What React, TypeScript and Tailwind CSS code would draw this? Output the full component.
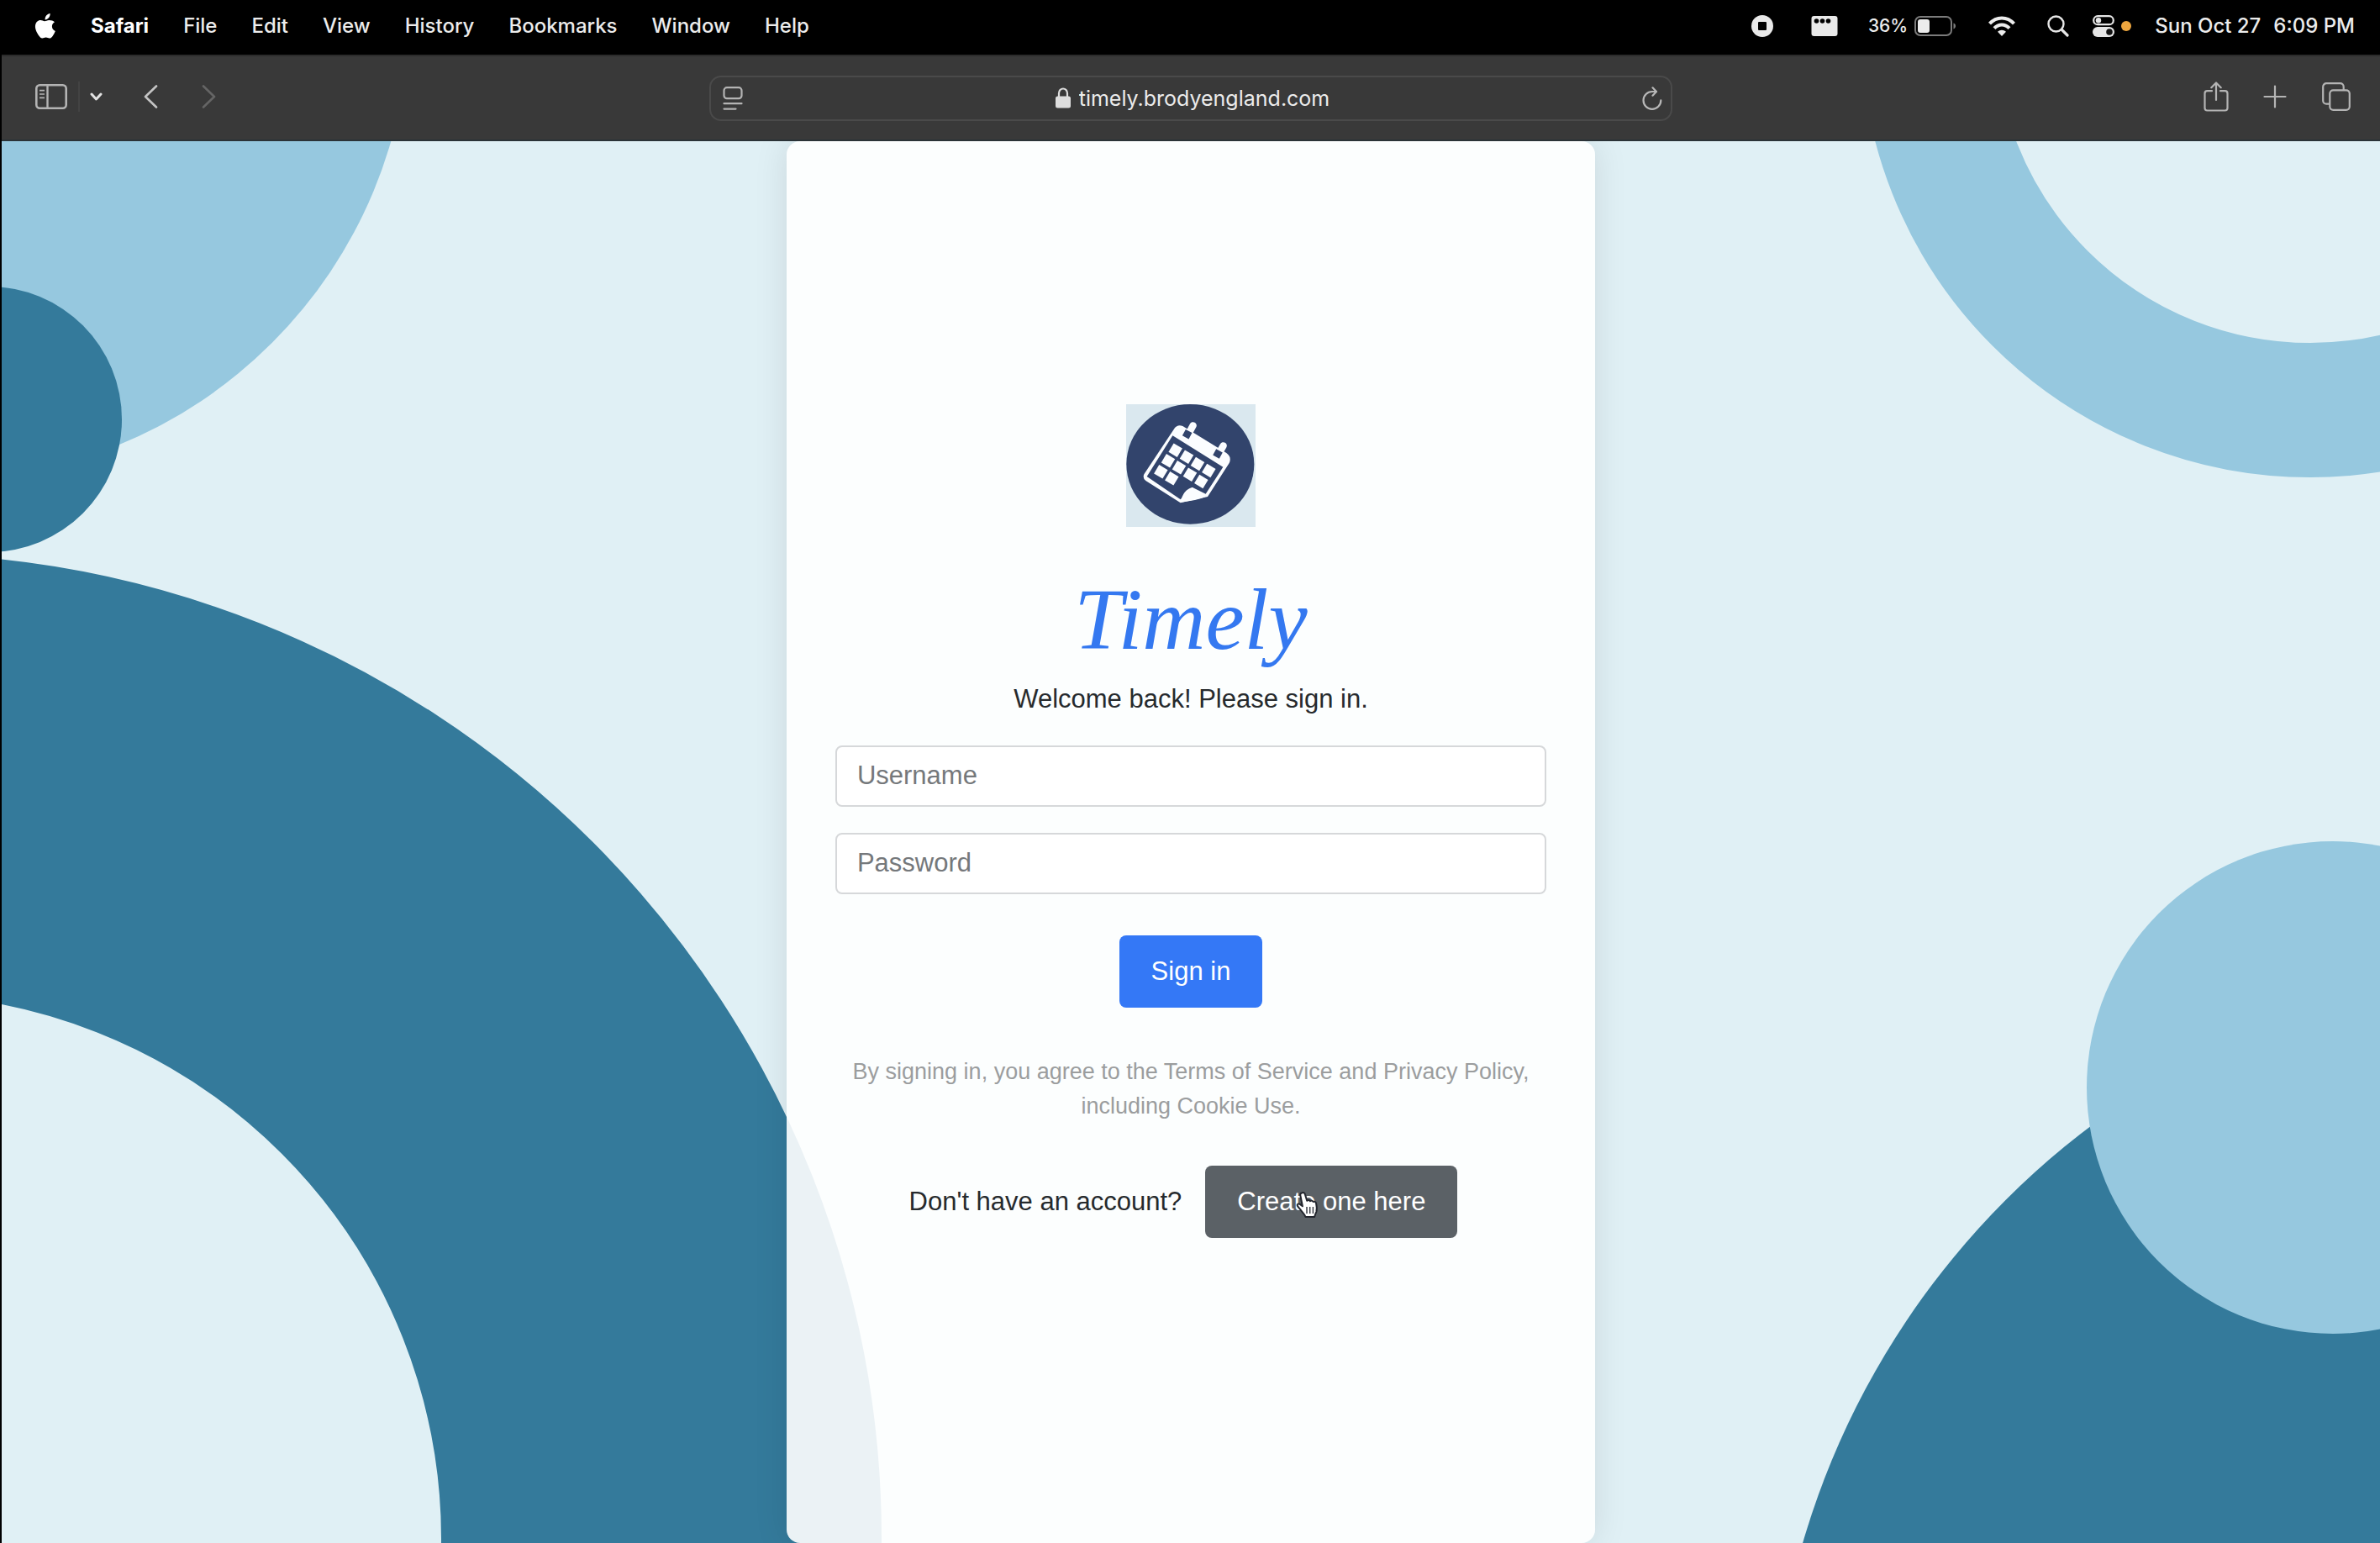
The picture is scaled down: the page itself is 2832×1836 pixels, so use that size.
import React from "react";

const menuItems = ["File", "Edit", "View", "History", "Bookmarks", "Window", "Help"];

const logoCells = [
  [480, 284],
  [520, 308],
  [559, 333],
  [599, 357],
  [454, 322],
  [493, 346],
  [532, 371],
  [572, 396],
  [428, 361],
  [467, 385],
];

function AppleIcon() {
  return (
    <svg className="h-[30px] w-[26px]" viewBox="0 0 26 30" fill="#fff" aria-hidden="true">
      <path d="M18.6 0c.2 2.1-.6 4-1.7 5.300C15.800 6.600 14.200 7.500 12.600 7.400c-.2-2 .7-3.900 1.700-5.100C15.400 1 17.200.1 18.600 0z" />
      <path d="M24 10.300c-2 1.200-3.100 3-3.100 5.100 0 2.500 1.500 4.600 3.900 5.500-.7 2.100-1.800 4.200-3.200 6-1 1.300-2.100 2.600-3.700 2.600-1.700 0-2.200-1-4.300-1-2 0-2.700 1-4.300 1s-2.700-1.200-3.800-2.700C3.200 23.500.4 18.600 1 14.300c.5-3.900 3.200-6.300 6.200-6.300 1.900 0 3.400 1.200 4.900 1.200 1.300 0 3.100-1.300 5.300-1.300 2.700 0 5 .8 6.600 2.400z" />
    </svg>
  );
}

function RecordIcon() {
  return (
    <svg className="size-[26px]" viewBox="0 0 26 26" aria-hidden="true">
      <circle cx="13" cy="13" r="13" fill="#e9e9e9" />
      <rect x="8" y="8" width="10" height="10" rx="1" fill="#000" />
    </svg>
  );
}

function ClipIcon() {
  return (
    <svg className="h-[24px] w-[32px]" viewBox="0 0 32 24" aria-hidden="true">
      <rect x="0.500" width="31" height="24" rx="3" fill="#e9e9e9" />
      <circle cx="6.500" cy="6" r="2.800" fill="#000" />
      <circle cx="13.500" cy="6" r="2.800" fill="#000" />
      <circle cx="20.500" cy="6" r="2.800" fill="#000" />
    </svg>
  );
}

function BatteryIcon() {
  return (
    <svg className="h-[24px] w-[50px]" viewBox="0 0 50 24" aria-hidden="true">
      <rect x="1" y="1" width="43" height="22" rx="6" fill="none" stroke="#7b7b7b" strokeWidth="2" />
      <rect x="4" y="4" width="14" height="16" rx="3" fill="#ececec" />
      <path d="M46.500 8.500c1.600.6 2.500 1.900 2.500 3.500s-.9 2.900-2.500 3.500z" fill="#7b7b7b" />
    </svg>
  );
}

function WifiIcon() {
  return (
    <svg className="h-[24px] w-[32px]" viewBox="0 0 32 24" fill="none" stroke="#ececec" strokeWidth="4" aria-hidden="true">
      <path d="M1.500 9.200C9.500 .2 22.500 .2 30.500 9.200" />
      <path d="M7 14.700c5-5.600 13-5.600 18 0" />
      <path d="M16 24l-5-5.200c2.800-2.700 7.200-2.700 10 0z" fill="#ececec" stroke="none" />
    </svg>
  );
}

function SearchIcon() {
  return (
    <svg className="size-[26px]" viewBox="0 0 26 26" fill="none" stroke="#e6e6e6" strokeLinecap="round" aria-hidden="true">
      <circle cx="10.500" cy="10.500" r="9" strokeWidth="2.400" />
      <path d="M17.500 17.500l6.500 6.500" strokeWidth="3.200" />
    </svg>
  );
}

function ControlIcon() {
  return (
    <svg className="size-[26px]" viewBox="0 0 26 26" aria-hidden="true">
      <rect x="1.200" y="1.200" width="23.600" height="10" rx="5" fill="none" stroke="#e6e6e6" strokeWidth="2.200" />
      <circle cx="7" cy="6.200" r="3.200" fill="#e6e6e6" />
      <rect x="0" y="14" width="26" height="12" rx="6" fill="#e6e6e6" />
      <circle cx="20" cy="20" r="3.800" fill="#111" />
    </svg>
  );
}

function SidebarIcon() {
  return (
    <svg className="h-[30px] w-[38px]" viewBox="0 0 38 30" fill="none" stroke="#b4b4b4" aria-hidden="true">
      <rect x="1.300" y="1.300" width="35.400" height="27.400" rx="4" strokeWidth="2.600" />
      <path d="M14.500 1.300v27.400" strokeWidth="2.400" />
      <path d="M5 7.700h6M5 12h6M5 16.300h6" strokeWidth="1.700" />
    </svg>
  );
}

function ReaderIcon() {
  return (
    <svg className="h-[28px] w-[24px]" viewBox="0 0 24 28" fill="none" stroke="#b4b4b4" strokeWidth="2.200" strokeLinecap="round" aria-hidden="true">
      <rect x="1.500" y="1.200" width="21" height="13" rx="3.500" />
      <path d="M1.500 20.200h21M1.500 26.600h14" />
    </svg>
  );
}

function LockIcon() {
  return (
    <svg className="h-[25px] w-[18px]" viewBox="0 0 18 25" aria-hidden="true">
      <rect x="0" y="10.500" width="18" height="14" rx="2.500" fill="#dedede" />
      <path d="M4 11.500V7a5 5.500 0 0110 0v4.500" fill="none" stroke="#dedede" strokeWidth="2.200" />
    </svg>
  );
}

function ReloadIcon() {
  return (
    <svg className="h-[28px] w-[24px]" viewBox="0 0 24 28" fill="none" stroke="#b8b8b8" strokeWidth="2.200" strokeLinecap="round" strokeLinejoin="round" aria-hidden="true">
      <path d="M22.300 16.400A10.400 10.400 0 1112 6h4.500" />
      <path d="M12.500 1.300L17 6l-4.500 4.700" />
    </svg>
  );
}

function ShareIcon() {
  return (
    <svg className="h-[36px] w-[30px]" viewBox="0 0 30 36" fill="none" stroke="#b4b4b4" strokeWidth="2.200" strokeLinecap="round" strokeLinejoin="round" aria-hidden="true">
      <path d="M10 11.200H4.500a3 3 0 00-3 3V31.500a3 3 0 003 3h21a3 3 0 003-3V14.200a3 3 0 00-3-3H20" />
      <path d="M15 22V1.800M9.300 7.200L15 1.500l5.700 5.700" />
    </svg>
  );
}

function PlusIcon() {
  return (
    <svg className="size-[28px]" viewBox="0 0 28 28" fill="none" stroke="#b4b4b4" strokeWidth="2.200" strokeLinecap="round" aria-hidden="true">
      <path d="M14 1.500v25M1.500 14h25" />
    </svg>
  );
}

function TabsIcon() {
  return (
    <svg className="h-[34px] w-[34px]" viewBox="0 0 34 34" fill="none" stroke="#b4b4b4" strokeWidth="2.200" aria-hidden="true">
      <rect x="9.300" y="9.300" width="23.500" height="23.500" rx="4" />
      <path d="M9.300 25.700H5.200a4 4 0 01-4-4V5.200a4 4 0 014-4h16.500a4 4 0 014 4v4.100" />
    </svg>
  );
}

function HandCursor() {
  return (
    <svg
      className="pointer-events-none absolute top-[36%] left-[36%] h-[34px] w-[28px]"
      viewBox="0 0 28 34"
      aria-hidden="true"
    >
      <path
        d="M7 2.500c2-1 3.500 0 4 2l2.200 7.300c1-1.300 3-1.200 3.800.4 1.200-1 3-.7 3.600.8 1.300-.8 3 0 3.400 1.600.8 3.400 1.300 6.900.4 10.200-.6 2-1.900 3.400-2.200 6.200H11.500c-.7-2.800-3.300-5-5.200-7.500-1.600-2.200-3.400-3.700-4.600-6-.5-1.700 1.400-2.700 3.200-1.600l3 2.400L5.300 5.300C5 4 5.700 2.900 7 2.500z"
        fill="#fff"
        stroke="#23262e"
        strokeWidth="2"
        strokeLinejoin="round"
      />
      <path d="M13 19v8M16.700 19v8M20.400 19v8" stroke="#3c4048" strokeWidth="1.500" />
    </svg>
  );
}

function TimelyLogo() {
  return (
    <svg className="h-[146px] w-[154px]" viewBox="304 120 462 438" role="img" aria-label="Timely logo">
      <rect x="304" y="120" width="462" height="438" fill="#dae8ef" />
      <ellipse cx="533" cy="334" rx="228" ry="214" fill="#32446c" />
      <path
        d="M474 210Q486 190 506 198L662 294Q682 308 672 330L595 450L498 472L374 393Q362 384 368 370Z"
        fill="#fbfdff"
      />
      <path d="M470 232L650 344L588 440L541 417Q520 424 513 444L498 460L378 378Z" fill="#32446c" />
      <path d="M498 470Q508 424 541 417Q556 436 592 448Q560 464 498 470Z" fill="#fbfdff" />
      {logoCells.map(([x, y]) => (
        <rect
          key={`${x}-${y}`}
          x={x - 18}
          y={y - 18}
          width="36"
          height="36"
          fill="#fbfdff"
          transform={`rotate(31 ${x} ${y})`}
        />
      ))}
      <path d="M543 196L532 216M651 268L640 287" stroke="#fbfdff" strokeWidth="25" strokeLinecap="round" />
      <path d="M528 216L516 238M637 286L625 308" stroke="#32446c" strokeWidth="26" />
    </svg>
  );
}

function Backdrop() {
  return (
    <svg
      className="absolute inset-0 h-full w-full"
      viewBox="2 168 2830 1668"
      preserveAspectRatio="xMidYMid slice"
      aria-hidden="true"
    >
      <circle cx="-70" cy="14" r="557" fill="#96c8df" />
      <circle cx="-13" cy="499" r="158" fill="#347a9b" />
      <circle cx="-123" cy="1831" r="910" fill="none" stroke="#347a9b" strokeWidth="524" />
      <circle cx="2749" cy="33" r="455" fill="none" stroke="#96c8df" strokeWidth="160" />
      <circle cx="3062" cy="2103" r="955" fill="#347a9b" />
      <circle cx="2776" cy="1294" r="293" fill="#96c8df" />
    </svg>
  );
}

function MenuBar() {
  return (
    <header className="flex h-[65px] items-center justify-between bg-black pr-[30px] pl-[41px] text-[24px] leading-none font-medium text-[#ececec]">
      <nav className="flex items-center gap-[41px] pb-1" aria-label="Menu bar">
        <button type="button" aria-label="Apple menu">
          <AppleIcon />
        </button>
        <button type="button" className="font-bold text-white">
          Safari
        </button>
        {menuItems.map((item) => (
          <button key={item} type="button">
            {item}
          </button>
        ))}
      </nav>
      <div className="flex items-center pb-1">
        <button type="button" aria-label="Stop recording" className="mr-[45px]">
          <RecordIcon />
        </button>
        <button type="button" aria-label="Screen clip" className="mr-9">
          <ClipIcon />
        </button>
        <span className="mr-2 text-[21px]">36%</span>
        <span className="mr-[38px]">
          <BatteryIcon />
        </span>
        <button type="button" aria-label="Wi-Fi" className="mr-[38px]">
          <WifiIcon />
        </button>
        <button type="button" aria-label="Search" className="mr-7">
          <SearchIcon />
        </button>
        <button type="button" aria-label="Control Center" className="mr-2">
          <ControlIcon />
        </button>
        <span className="mr-7 size-3 rounded-full bg-[#eda63f]" />
        <time className="flex gap-[15px]">
          <span>Sun Oct 27</span>
          <span>6:09 PM</span>
        </time>
      </div>
    </header>
  );
}

function Toolbar() {
  return (
    <div className="grid h-[103px] grid-cols-[1fr_40.5%_1fr] items-center border-t-2 border-b-2 border-t-[#2c2c2c] border-b-[#2b3337] bg-[#393939]">
      <div className="flex items-center pb-1 pl-10">
        <button type="button" aria-label="Sidebar">
          <SidebarIcon />
        </button>
        <span className="mr-3 ml-[13px] h-9 w-[2px] bg-[#434343]" />
        <button type="button" aria-label="Tab groups" className="mr-[49px]">
          <svg className="h-[10px] w-[15px]" viewBox="0 0 15 10" fill="none" stroke="#e2e2e2" strokeWidth="3" strokeLinecap="round" strokeLinejoin="round" aria-hidden="true">
            <path d="M2 2l5.500 6L13 2" />
          </svg>
        </button>
        <button type="button" aria-label="Back" className="mr-[52px]">
          <svg className="h-[28px] w-[17px]" viewBox="0 0 17 28" fill="none" stroke="#c4c4c4" strokeWidth="2.600" strokeLinecap="round" strokeLinejoin="round" aria-hidden="true">
            <path d="M15 1.500L2 14l13 12.500" />
          </svg>
        </button>
        <button type="button" aria-label="Forward">
          <svg className="h-[28px] w-[17px]" viewBox="0 0 17 28" fill="none" stroke="#656565" strokeWidth="2.600" strokeLinecap="round" strokeLinejoin="round" aria-hidden="true">
            <path d="M2 1.500L15 14 2 26.500" />
          </svg>
        </button>
      </div>
      <div className="flex h-[54px] items-center rounded-[14px] border-2 border-[#4a4a4a] pr-[10px] pl-[14px]">
        <button type="button" aria-label="Page menu">
          <ReaderIcon />
        </button>
        <div className="flex flex-1 items-center justify-center gap-[10px]">
          <LockIcon />
          <input
            type="text"
            aria-label="Address"
            defaultValue="timely.brodyengland.com"
            className="field-sizing-content bg-transparent text-[25px] leading-8 text-[#ececec] outline-none"
          />
        </div>
        <button type="button" aria-label="Reload">
          <ReloadIcon />
        </button>
      </div>
      <div className="flex items-center justify-end pr-[35px] pb-1">
        <button type="button" aria-label="Share" className="mr-[41px]">
          <ShareIcon />
        </button>
        <button type="button" aria-label="New tab" className="mr-[42px]">
          <PlusIcon />
        </button>
        <button type="button" aria-label="Tab overview">
          <TabsIcon />
        </button>
      </div>
    </div>
  );
}

function SignInCard() {
  return (
    <form
      className="relative flex w-[34%] flex-col items-center justify-center rounded-[16px] bg-white/90 px-[58px] pb-[51px] text-[31px] leading-[46px] text-[#262a2d] shadow-[0_0_40px_rgba(0,0,0,0.1)]"
      onSubmit={(event: React.FormEvent) => event.preventDefault()}
    >
      <TimelyLogo />
      <h1 className="mt-[50px] mb-3 font-['Apple_Chancery','Liberation_Serif',serif] text-[104px] leading-[120px] text-[#3478f0] italic">
        Timely
      </h1>
      <p className="mb-8">Welcome back! Please sign in.</p>
      <input
        type="text"
        aria-label="Username"
        placeholder="Username"
        className="mb-[31px] h-[73px] w-full rounded-[8px] border-2 border-[#d6d8da] bg-white px-6 outline-none placeholder:text-[#75787b]"
      />
      <input
        type="password"
        aria-label="Password"
        placeholder="Password"
        className="mb-[49px] h-[73px] w-full rounded-[8px] border-2 border-[#d6d8da] bg-white px-6 outline-none placeholder:text-[#75787b]"
      />
      <button type="submit" className="mb-14 rounded-[8px] bg-[#3478f6] px-[38px] py-5 text-white">
        Sign in
      </button>
      <p className="mb-[50px] text-center text-[27px] leading-[41px] text-[#9b9d9e]">
        By signing in, you agree to the Terms of Service and Privacy Policy, including Cookie Use.
      </p>
      <div className="flex items-center pr-[18px] whitespace-nowrap">
        <span className="mr-7">Don't have an account?</span>
        <button type="button" className="relative rounded-[8px] bg-[#5b6166] px-[38px] py-5 text-white">
          Create one here
          <HandCursor />
        </button>
      </div>
    </form>
  );
}

export default function App() {
  return (
    <div className="flex min-h-screen flex-col bg-black font-['Inter',sans-serif]">
      <MenuBar />
      <div className="flex flex-1 flex-col border-l-2 border-black">
        <Toolbar />
        <main className="relative flex flex-1 justify-center overflow-hidden bg-[#e0f0f5] font-['Liberation_Sans',Arial,sans-serif]">
          <Backdrop />
          <SignInCard />
        </main>
      </div>
    </div>
  );
}
